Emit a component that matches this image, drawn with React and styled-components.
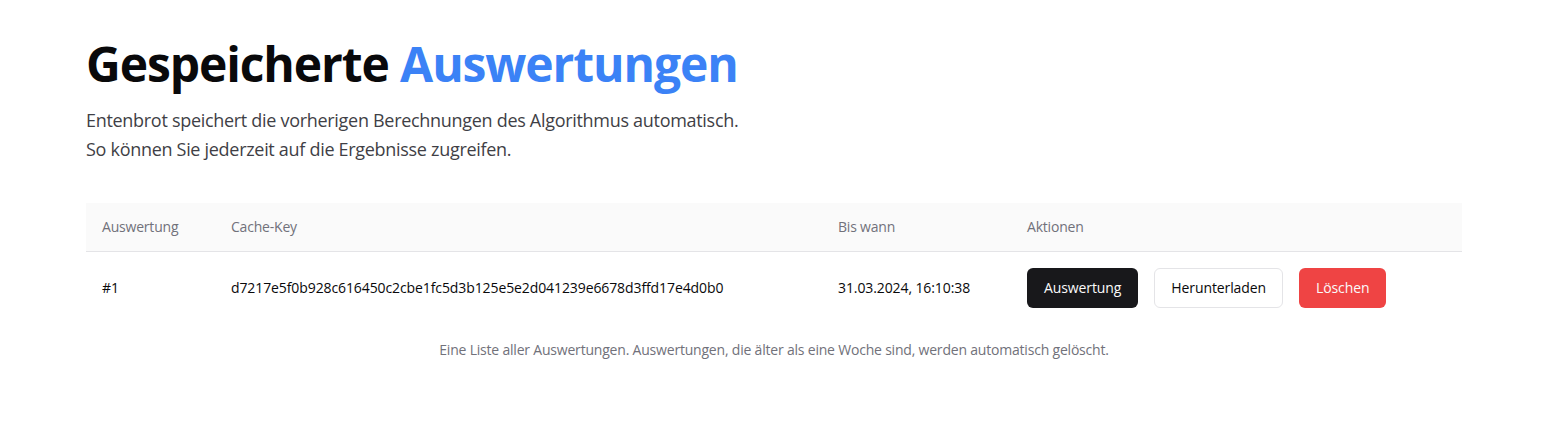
import React from "react";
import styled, { createGlobalStyle } from "styled-components";

const Global = createGlobalStyle`
  html, body { margin: 0; padding: 0; background: #ffffff; }
  body { font-family: "Open Sans", "Noto Sans", sans-serif; color: #09090b; }
  * { box-sizing: border-box; }
`;

const Page = styled.main`
  padding: 40px 100px 40px 86px;
`;

const Title = styled.h1`
  margin: 0;
  font-size: 48px;
  line-height: 48px;
  font-weight: 700;
  letter-spacing: -1.1px;
  color: #09090b;
`;

const Accent = styled.span`
  color: #3b82f6;
`;

const Lead = styled.p`
  margin: 18px 0 0;
  font-size: 18px;
  line-height: 29px;
  color: #3f3f46;
  letter-spacing: -0.3px;
`;

const Table = styled.table`
  margin-top: 39px;
  width: 100%;
  border-collapse: collapse;
  table-layout: fixed;
  font-size: 14px;
`;

const HeadRow = styled.tr`
  background: #fafafa;
  border-bottom: 1px solid #e4e4e7;
`;

const Th = styled.th`
  height: 48px;
  padding: 0 16px;
  text-align: left;
  font-weight: 400;
  color: #71717a;
  letter-spacing: -0.2px;
`;

const Td = styled.td`
  padding: 16px;
  height: 72px;
  color: #09090b;
  letter-spacing: -0.1px;
  white-space: nowrap;
`;

const Actions = styled.div`
  display: flex;
  gap: 16px;
`;

const Button = styled.button`
  height: 40px;
  padding: 0 16px;
  border-radius: 6px;
  font-family: inherit;
  font-size: 14px;
  font-weight: 500;
  letter-spacing: -0.1px;
  cursor: pointer;
  border: 1px solid ${(p) => (p.$variant === "outline" ? "#e4e4e7" : "transparent")};
  background: ${(p) =>
    p.$variant === "dark" ? "#18181b" : p.$variant === "danger" ? "#ef4444" : "#ffffff"};
  color: ${(p) => (p.$variant === "outline" ? "#09090b" : "#fafafa")};
`;

const Caption = styled.caption`
  caption-side: bottom;
  padding-top: 16px;
  font-size: 14px;
  line-height: 20px;
  color: #71717a;
  letter-spacing: -0.2px;
`;

export default function App() {
  return (
    <>
      <Global />
      <Page>
        <Title>
          Gespeicherte <Accent>Auswertungen</Accent>
        </Title>
        <Lead>
          Entenbrot speichert die vorherigen Berechnungen des Algorithmus automatisch.
          <br />
          So können Sie jederzeit auf die Ergebnisse zugreifen.
        </Lead>
        <Table>
          <colgroup>
            <col style={{ width: 129 }} />
            <col style={{ width: 607 }} />
            <col style={{ width: 189 }} />
            <col />
          </colgroup>
          <Caption>
            Eine Liste aller Auswertungen. Auswertungen, die älter als eine Woche sind, werden
            automatisch gelöscht.
          </Caption>
          <thead>
            <HeadRow>
              <Th>Auswertung</Th>
              <Th>Cache-Key</Th>
              <Th>Bis wann</Th>
              <Th>Aktionen</Th>
            </HeadRow>
          </thead>
          <tbody>
            <tr>
              <Td>#1</Td>
              <Td>d7217e5f0b928c616450c2cbe1fc5d3b125e5e2d041239e6678d3ffd17e4d0b0</Td>
              <Td>31.03.2024, 16:10:38</Td>
              <Td>
                <Actions>
                  <Button $variant="dark">Auswertung</Button>
                  <Button $variant="outline">Herunterladen</Button>
                  <Button $variant="danger">Löschen</Button>
                </Actions>
              </Td>
            </tr>
          </tbody>
        </Table>
      </Page>
    </>
  );
}
